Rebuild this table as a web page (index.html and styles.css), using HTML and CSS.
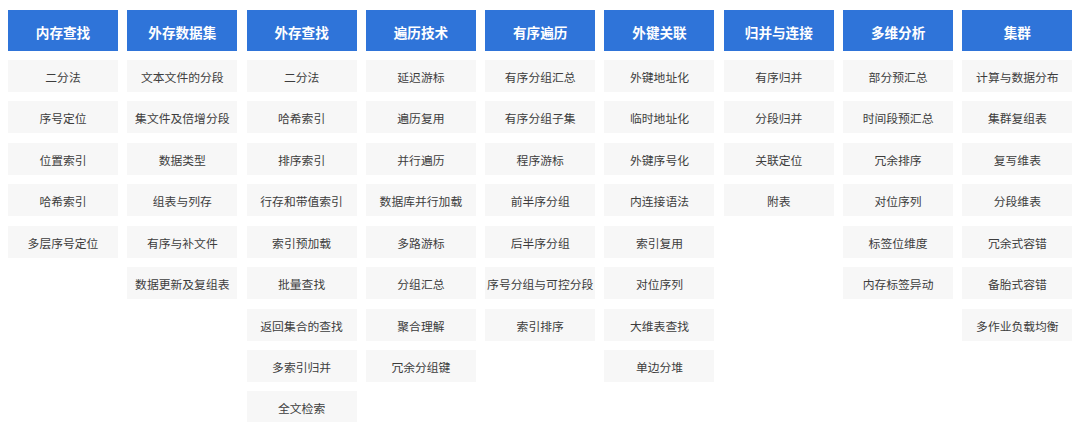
FILE: index.html
```html
<!DOCTYPE html>
<html lang="zh-CN">
<head>
<meta charset="utf-8">
<link rel="stylesheet" href="styles.css">
</head>
<body>
<div class="board">
  <div class="col">
    <div class="head">内存查找</div>
    <div class="cell">二分法</div>
    <div class="cell">序号定位</div>
    <div class="cell">位置索引</div>
    <div class="cell">哈希索引</div>
    <div class="cell">多层序号定位</div>
  </div>
  <div class="col">
    <div class="head">外存数据集</div>
    <div class="cell">文本文件的分段</div>
    <div class="cell">集文件及倍增分段</div>
    <div class="cell">数据类型</div>
    <div class="cell">组表与列存</div>
    <div class="cell">有序与补文件</div>
    <div class="cell">数据更新及复组表</div>
  </div>
  <div class="col">
    <div class="head">外存查找</div>
    <div class="cell">二分法</div>
    <div class="cell">哈希索引</div>
    <div class="cell">排序索引</div>
    <div class="cell">行存和带值索引</div>
    <div class="cell">索引预加载</div>
    <div class="cell">批量查找</div>
    <div class="cell">返回集合的查找</div>
    <div class="cell">多索引归并</div>
    <div class="cell">全文检索</div>
  </div>
  <div class="col">
    <div class="head">遍历技术</div>
    <div class="cell">延迟游标</div>
    <div class="cell">遍历复用</div>
    <div class="cell">并行遍历</div>
    <div class="cell">数据库并行加载</div>
    <div class="cell">多路游标</div>
    <div class="cell">分组汇总</div>
    <div class="cell">聚合理解</div>
    <div class="cell">冗余分组键</div>
  </div>
  <div class="col">
    <div class="head">有序遍历</div>
    <div class="cell">有序分组汇总</div>
    <div class="cell">有序分组子集</div>
    <div class="cell">程序游标</div>
    <div class="cell">前半序分组</div>
    <div class="cell">后半序分组</div>
    <div class="cell">序号分组与可控分段</div>
    <div class="cell">索引排序</div>
  </div>
  <div class="col">
    <div class="head">外键关联</div>
    <div class="cell">外键地址化</div>
    <div class="cell">临时地址化</div>
    <div class="cell">外键序号化</div>
    <div class="cell">内连接语法</div>
    <div class="cell">索引复用</div>
    <div class="cell">对位序列</div>
    <div class="cell">大维表查找</div>
    <div class="cell">单边分堆</div>
  </div>
  <div class="col">
    <div class="head">归并与连接</div>
    <div class="cell">有序归并</div>
    <div class="cell">分段归并</div>
    <div class="cell">关联定位</div>
    <div class="cell">附表</div>
  </div>
  <div class="col">
    <div class="head">多维分析</div>
    <div class="cell">部分预汇总</div>
    <div class="cell">时间段预汇总</div>
    <div class="cell">冗余排序</div>
    <div class="cell">对位序列</div>
    <div class="cell">标签位维度</div>
    <div class="cell">内存标签异动</div>
  </div>
  <div class="col">
    <div class="head">集群</div>
    <div class="cell">计算与数据分布</div>
    <div class="cell">集群复组表</div>
    <div class="cell">复写维表</div>
    <div class="cell">分段维表</div>
    <div class="cell">冗余式容错</div>
    <div class="cell">备胎式容错</div>
    <div class="cell">多作业负载均衡</div>
  </div>
</div>
</body>
</html>
```

FILE: styles.css
```css
html, body {
  margin: 0;
  padding: 0;
  background: #ffffff;
}

body {
  font-family: "Noto Sans CJK SC", "Noto Sans", sans-serif;
  color: #3d3d3d;
}

.board {
  display: grid;
  grid-template-columns: repeat(9, 110px);
  column-gap: 9.3px;
  align-items: start;
  padding: 10px 0 0 8px;
}

.col {
  display: flex;
  flex-direction: column;
  gap: 9.45px;
}

.head {
  height: 41px;
  display: flex;
  align-items: center;
  justify-content: center;
  background: #2f74d9;
  color: #ffffff;
  font-size: 13.6px;
  font-weight: 700;
  padding-top: 2px;
  box-sizing: border-box;
  margin-bottom: -0.5px;
}

.cell {
  height: 32px;
  display: flex;
  align-items: center;
  justify-content: center;
  background: #f7f7f7;
  font-size: 11.8px;
  white-space: nowrap;
  padding-top: 1px;
  box-sizing: border-box;
}
```
